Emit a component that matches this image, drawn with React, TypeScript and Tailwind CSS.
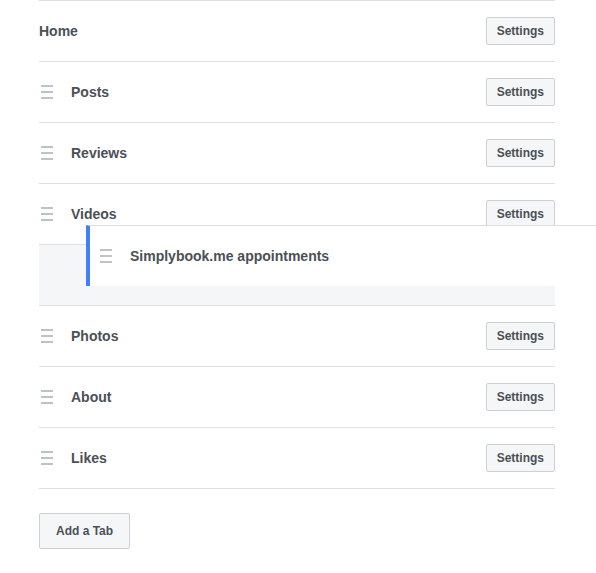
import React from "react";

const TABS_BEFORE = ["Posts", "Reviews", "Videos"];
const TABS_AFTER = ["Photos", "About", "Likes"];

function DragHandle() {
  return (
    <span className="flex w-3 flex-col gap-[4px]">
      <span className="h-[2px] w-3 bg-[#bec3c9]" />
      <span className="h-[2px] w-3 bg-[#bec3c9]" />
      <span className="h-[2px] w-3 bg-[#bec3c9]" />
    </span>
  );
}

function SettingsButton() {
  return (
    <button className="h-[28px] rounded-[2px] border border-[#ccd0d5] bg-[#f5f6f7] px-[10px] text-[12px] font-bold text-[#4b4f56]">
      Settings
    </button>
  );
}

function TabRow({ name, handle = true }: { name: string; handle?: boolean }) {
  return (
    <div className="flex h-[61px] items-center border-b border-[#dddfe2]">
      {handle && (
        <span className="ml-[2px] mr-[18px]">
          <DragHandle />
        </span>
      )}
      <span className="flex-1 text-[14px] font-bold text-[#4b4f56]">{name}</span>
      <SettingsButton />
    </div>
  );
}

export default function App() {
  return (
    <div
      className="relative h-[573px] w-[596px] overflow-hidden bg-white"
      style={{ fontFamily: '"Liberation Sans", Arial, sans-serif' }}
    >
      <div className="ml-[39px] w-[516px]">
        <div className="border-t border-[#dddfe2]">
          <TabRow name="Home" handle={false} />
          {TABS_BEFORE.map((t) => (
            <TabRow key={t} name={t} />
          ))}
          {/* drop placeholder */}
          <div className="h-[61px] border-b border-[#dddfe2] bg-[#f5f6f7]" />
          {TABS_AFTER.map((t) => (
            <TabRow key={t} name={t} />
          ))}
        </div>

        <button className="mt-[24px] h-[36px] rounded-[2px] border border-[#ccd0d5] bg-[#f5f6f7] px-[16px] text-[12px] font-bold text-[#4b4f56]">
          Add a Tab
        </button>
      </div>

      {/* item being dragged */}
      <div className="absolute left-[86px] top-[225px] flex h-[61px] w-[530px] items-center border-t border-l-4 border-[#dddfe2] border-l-[#4080ff] bg-white">
        <span className="ml-[10px] mr-[18px]">
          <DragHandle />
        </span>
        <span className="text-[14px] font-bold text-[#4b4f56]">
          Simplybook.me appointments
        </span>
      </div>
    </div>
  );
}
